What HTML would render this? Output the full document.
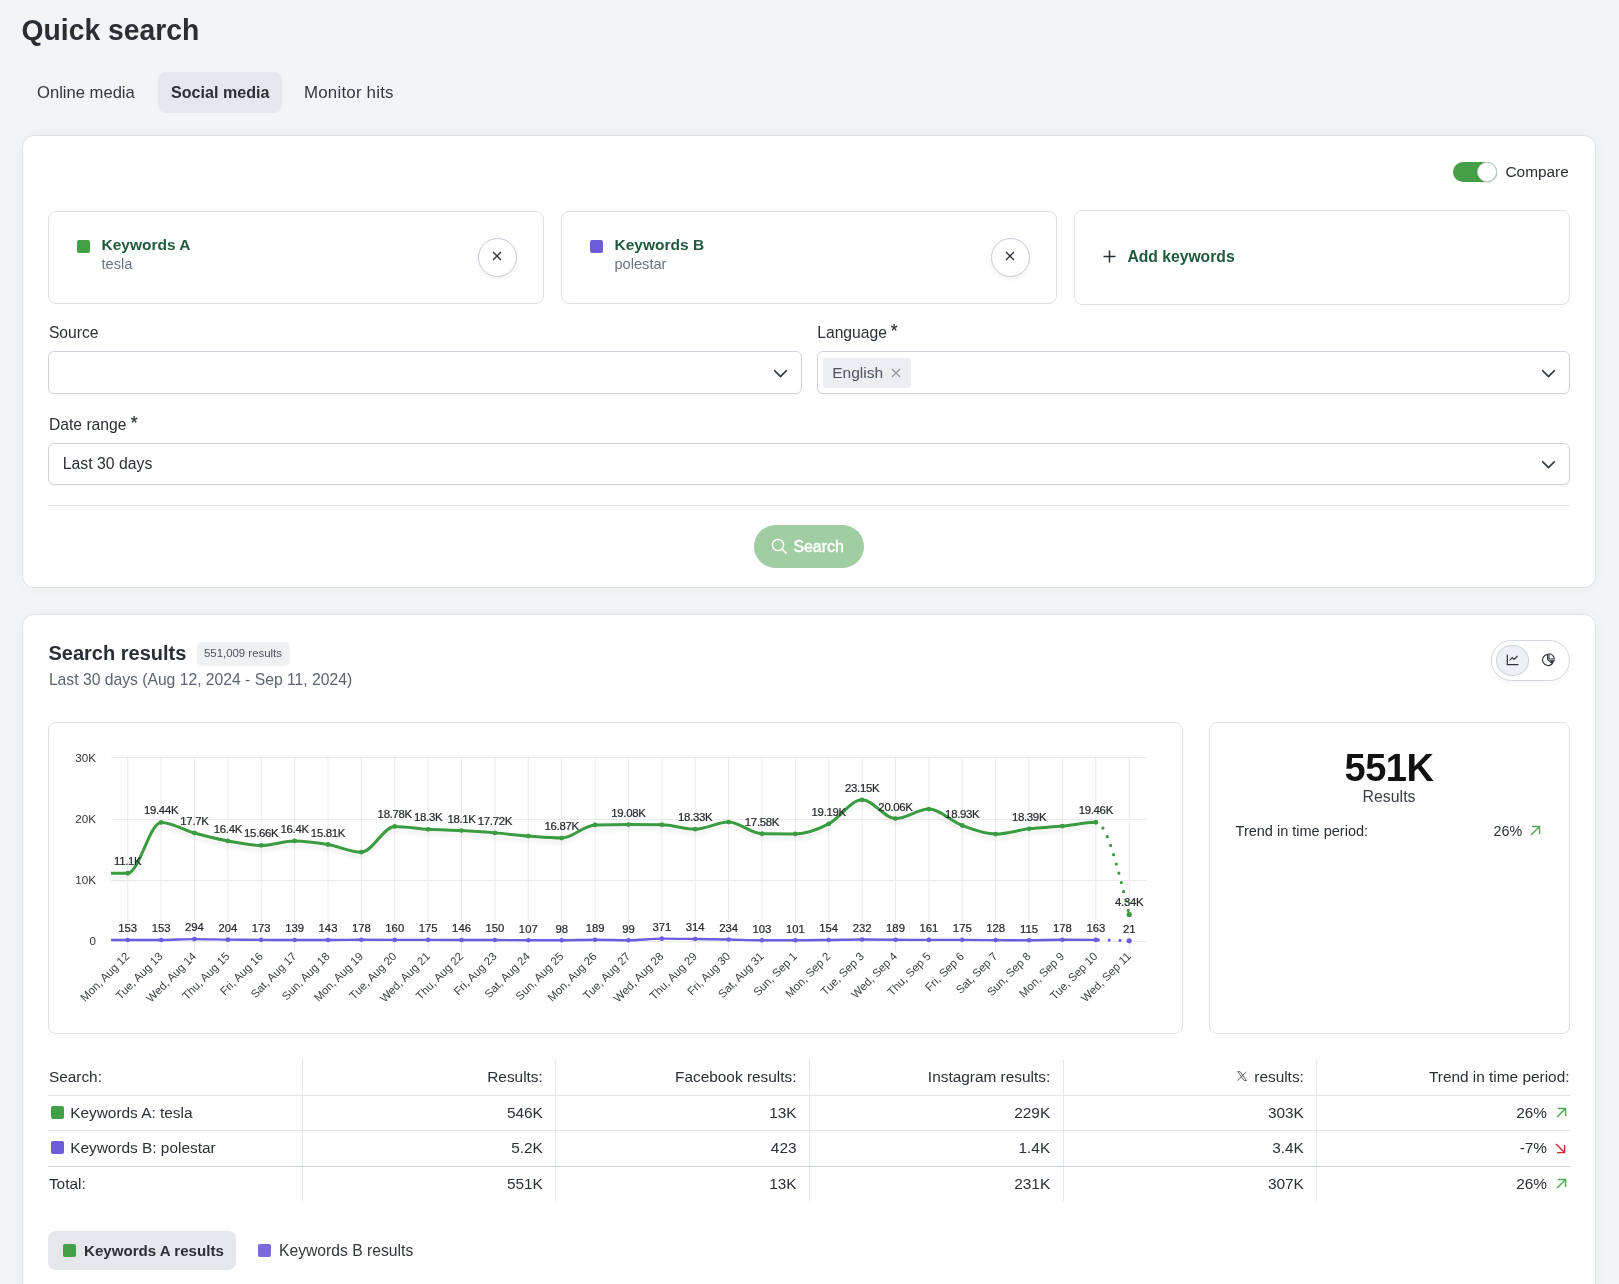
<!DOCTYPE html>
<html><head><meta charset="utf-8"><title>Quick search</title>
<style>
html,body{margin:0;padding:0;}
body{width:1619px;height:1284px;overflow:hidden;position:relative;background:#f3f4f6;font-family:"Liberation Sans", sans-serif;}
#w{position:absolute;left:0;top:0;width:1619px;height:1284px;will-change:transform;}
.t{position:absolute;white-space:nowrap;line-height:1;}
svg text{font-family:"Liberation Sans", sans-serif;}
</style></head><body><div id="w">
<div class="t" style="left:21.50px;top:15.90px;font-size:28.3px;font-weight:700;color:#2a2e35;transform:scaleY(1.06);transform-origin:0 84%;">Quick search</div>
<div style="position:absolute;left:158px;top:72px;width:124px;height:41px;box-sizing:border-box;background:#e5e7eb;border-radius:8px;"></div>
<div class="t" style="left:37.00px;top:84.51px;font-size:16.6px;font-weight:400;color:#33373d;">Online media</div>
<div class="t" style="left:171.00px;top:84.23px;font-size:16.1px;font-weight:700;color:#2b2f36;">Social media</div>
<div class="t" style="left:304.00px;top:85.26px;font-size:16.9px;font-weight:400;color:#33373d;letter-spacing:0.2px;">Monitor hits</div>
<div style="position:absolute;left:22px;top:135px;width:1574px;height:453px;box-sizing:border-box;background:#fff;border:1px solid #dde1e6;border-radius:12px;box-shadow:0 0 14px rgba(30,40,60,0.035);"></div>
<div style="position:absolute;left:1453px;top:162px;width:44px;height:20px;box-sizing:border-box;background:#43a047;border-radius:10px;"></div>
<div style="position:absolute;left:1477px;top:162px;width:20px;height:20px;box-sizing:border-box;background:#fff;border-radius:50%;border:1px solid #c9d0d6;box-shadow:0 1px 2px rgba(0,0,0,0.15);"></div>
<div class="t" style="left:1505.50px;top:163.61px;font-size:15.4px;font-weight:400;color:#2b2f36;">Compare</div>
<div style="position:absolute;left:48px;top:211px;width:496px;height:93px;box-sizing:border-box;background:#fff;border:1px solid #dde1e6;border-radius:8px;"></div>
<div style="position:absolute;left:77px;top:240px;width:13px;height:13px;box-sizing:border-box;background:#43a047;border-radius:2px;"></div>
<div class="t" style="left:101.50px;top:236.83px;font-size:15.5px;font-weight:700;color:#1f5a3c;">Keywords A</div>
<div class="t" style="left:101.50px;top:256.77px;font-size:14.6px;font-weight:400;color:#6b7280;">tesla</div>
<div style="position:absolute;left:478.0px;top:237.89999999999998px;width:39.0px;height:39.0px;box-sizing:border-box;background:#fff;border:1px solid #c6cdd5;border-radius:50%;box-shadow:0 2px 4px rgba(0,0,0,0.06);"></div>
<svg style="position:absolute;left:492.0px;top:251.2px" width="10" height="10" viewBox="0 0 10 10"><path d="M1 1L9 9M9 1L1 9" stroke="#2b2f36" stroke-width="1.35" stroke-linecap="butt"/></svg>
<div style="position:absolute;left:561px;top:211px;width:496px;height:93px;box-sizing:border-box;background:#fff;border:1px solid #dde1e6;border-radius:8px;"></div>
<div style="position:absolute;left:590px;top:240px;width:13px;height:13px;box-sizing:border-box;background:#6d5bd8;border-radius:2px;"></div>
<div class="t" style="left:614.50px;top:236.83px;font-size:15.5px;font-weight:700;color:#1f5a3c;">Keywords B</div>
<div class="t" style="left:614.50px;top:256.77px;font-size:14.6px;font-weight:400;color:#6b7280;">polestar</div>
<div style="position:absolute;left:991.0px;top:237.89999999999998px;width:39.0px;height:39.0px;box-sizing:border-box;background:#fff;border:1px solid #c6cdd5;border-radius:50%;box-shadow:0 2px 4px rgba(0,0,0,0.06);"></div>
<svg style="position:absolute;left:1005.0px;top:251.2px" width="10" height="10" viewBox="0 0 10 10"><path d="M1 1L9 9M9 1L1 9" stroke="#2b2f36" stroke-width="1.35" stroke-linecap="butt"/></svg>
<div style="position:absolute;left:1074px;top:210px;width:496px;height:95px;box-sizing:border-box;background:#fff;border:1px solid #dde1e6;border-radius:8px;"></div>
<svg style="position:absolute;left:1103px;top:250px" width="13" height="13" viewBox="0 0 13 13"><path d="M6.5 0.5V12.5M0.5 6.5H12.5" stroke="#2b2f36" stroke-width="1.5"/></svg>
<div class="t" style="left:1127.40px;top:248.96px;font-size:15.7px;font-weight:700;color:#1f5a3c;">Add keywords</div>
<div class="t" style="left:48.90px;top:325.06px;font-size:15.7px;font-weight:400;color:#2b2f36;">Source</div>
<div class="t" style="left:817.20px;top:325.06px;font-size:15.7px;font-weight:400;color:#2b2f36;">Language</div>
<div class="t" style="left:890.80px;top:322.67px;font-size:17.5px;font-weight:400;color:#2b2f36;-webkit-text-stroke:0.2px #2b2f36;">*</div>
<div style="position:absolute;left:48px;top:351px;width:754px;height:43px;box-sizing:border-box;background:#fff;border:1px solid #cfd4da;border-radius:6px;box-shadow:0 1px 2px rgba(0,0,0,0.04);"></div>
<svg style="position:absolute;left:773px;top:369px" width="15" height="9" viewBox="0 0 15 9"><path d="M1.2 1.2L7.5 7.5L13.8 1.2" fill="none" stroke="#2b2f36" stroke-width="1.6"/></svg>
<div style="position:absolute;left:817px;top:351px;width:753px;height:43px;box-sizing:border-box;background:#fff;border:1px solid #cfd4da;border-radius:6px;box-shadow:0 1px 2px rgba(0,0,0,0.04);"></div>
<svg style="position:absolute;left:1541px;top:369px" width="15" height="9" viewBox="0 0 15 9"><path d="M1.2 1.2L7.5 7.5L13.8 1.2" fill="none" stroke="#2b2f36" stroke-width="1.6"/></svg>
<div style="position:absolute;left:823px;top:358px;width:88px;height:30px;box-sizing:border-box;background:#eceef1;border-radius:4px;"></div>
<div class="t" style="left:832.20px;top:365.03px;font-size:15.5px;font-weight:400;color:#4b5260;">English</div>
<svg style="position:absolute;left:891px;top:368px" width="10" height="10" viewBox="0 0 10 10"><path d="M1 1L9 9M9 1L1 9" stroke="#8e959e" stroke-width="1.2"/></svg>
<div class="t" style="left:48.90px;top:416.96px;font-size:15.7px;font-weight:400;color:#2b2f36;">Date range</div>
<div class="t" style="left:130.80px;top:415.27px;font-size:17.5px;font-weight:400;color:#2b2f36;-webkit-text-stroke:0.2px #2b2f36;">*</div>
<div style="position:absolute;left:48px;top:443px;width:1522px;height:42px;box-sizing:border-box;background:#fff;border:1px solid #cfd4da;border-radius:6px;box-shadow:0 1px 2px rgba(0,0,0,0.04);"></div>
<div class="t" style="left:62.80px;top:455.88px;font-size:15.8px;font-weight:400;color:#2b2f36;">Last 30 days</div>
<svg style="position:absolute;left:1541px;top:460px" width="15" height="9" viewBox="0 0 15 9"><path d="M1.2 1.2L7.5 7.5L13.8 1.2" fill="none" stroke="#2b2f36" stroke-width="1.6"/></svg>
<div style="position:absolute;left:48px;top:505px;width:1522px;height:1px;box-sizing:border-box;background:#e1e4e8;"></div>
<div style="position:absolute;left:754px;top:525px;width:110px;height:43px;box-sizing:border-box;background:#a0cda2;border-radius:22px;"></div>
<svg style="position:absolute;left:771px;top:538px" width="17" height="17" viewBox="0 0 17 17"><circle cx="7" cy="7" r="5.6" fill="none" stroke="#fff" stroke-width="1.5"/><path d="M11.2 11.2L15.6 15.6" stroke="#fff" stroke-width="1.5"/></svg>
<div class="t" style="left:793.40px;top:538.80px;font-size:15.9px;font-weight:400;color:#ffffff;-webkit-text-stroke:0.45px #fff;">Search</div>
<div style="position:absolute;left:22px;top:614px;width:1574px;height:686px;box-sizing:border-box;background:#fff;border:1px solid #dde1e6;border-radius:12px;box-shadow:0 0 14px rgba(30,40,60,0.035);"></div>
<div class="t" style="left:48.50px;top:643.39px;font-size:20px;font-weight:700;color:#2a2e35;">Search results</div>
<div style="position:absolute;left:197px;top:642px;width:93px;height:24px;box-sizing:border-box;background:#eef0f2;border-radius:5px;"></div>
<div class="t" style="left:204.00px;top:647.53px;font-size:11.4px;font-weight:400;color:#4b5260;">551,009 results</div>
<div class="t" style="left:48.90px;top:671.96px;font-size:15.7px;font-weight:400;color:#5d6470;">Last 30 days (Aug 12, 2024 - Sep 11, 2024)</div>
<div style="position:absolute;left:1491px;top:640px;width:79px;height:41px;box-sizing:border-box;background:#fff;border:1px solid #d3d8de;border-radius:21px;box-shadow:0 2px 4px rgba(0,0,0,0.04);"></div>
<div style="position:absolute;left:1496.3px;top:645px;width:32.40000000000009px;height:30.600000000000023px;box-sizing:border-box;background:#eef0f3;border:1px solid #cdd3da;border-radius:50%;"></div>
<svg style="position:absolute;left:1485px;top:635px" width="90" height="50" viewBox="1485 635 90 50"><path d="M1507.3 654.4V664.6H1518.5" fill="none" stroke="#2f3338" stroke-width="1.25"/><path d="M1509.5 660.5L1512.2 657.6L1514 659.4L1517.6 656" fill="none" stroke="#2f3338" stroke-width="1.05"/><path d="M1547.6 654.4A5.6 5.6 0 1 0 1552.4 663.6L1547.6 659.6Z" fill="none" stroke="#2f3338" stroke-width="1.15" stroke-linejoin="round"/><path d="M1549 653.8A5.4 5.4 0 0 1 1554.3 659H1549Z" fill="none" stroke="#2f3338" stroke-width="1.1"/><path d="M1549.2 660.2H1555L1552.6 663.8Z" fill="#2f3338"/></svg>
<div style="position:absolute;left:48px;top:722px;width:1135px;height:312px;box-sizing:border-box;background:#fff;border:1px solid #dde1e6;border-radius:8px;"></div>
<div style="position:absolute;left:1209px;top:722px;width:361px;height:312px;box-sizing:border-box;background:#fff;border:1px solid #dde1e6;border-radius:8px;"></div>
<div class="t" style="left:989.00px;width:800px;text-align:center;top:748.94px;font-size:38px;font-weight:700;color:#111111;letter-spacing:-0.5px;">551K</div>
<div class="t" style="left:989.00px;width:800px;text-align:center;top:789.30px;font-size:15.9px;font-weight:400;color:#3b4048;">Results</div>
<div class="t" style="left:1235.60px;top:823.96px;font-size:14.5px;font-weight:400;color:#2b2f36;">Trend in time period:</div>
<div class="t" style="right:96.80px;text-align:right;top:824.12px;font-size:14.3px;font-weight:400;color:#2b2f36;">26%</div>
<svg style="position:absolute;left:1529.5px;top:824.5px" width="11" height="11" viewBox="0 0 11 11"><path d="M1 10L9.6 1.4M2 1.4H9.6V9" fill="none" stroke="#4fae55" stroke-width="1.45"/></svg>
<svg style="position:absolute;left:0;top:0" width="1619" height="1284" viewBox="0 0 1619 1284">
<defs><filter id="sh" x="-5%" y="-20%" width="110%" height="160%"><feGaussianBlur in="SourceAlpha" stdDeviation="2.2"/><feOffset dy="3.5"/><feComponentTransfer><feFuncA type="linear" slope="0.08"/></feComponentTransfer><feMerge><feMergeNode/><feMergeNode in="SourceGraphic"/></feMerge></filter></defs>
<line x1="111" y1="941.50" x2="1146.5" y2="941.50" stroke="#e8eaee" stroke-width="1"/>
<line x1="111" y1="880.50" x2="1146.5" y2="880.50" stroke="#e8eaee" stroke-width="1"/>
<line x1="111" y1="819.50" x2="1146.5" y2="819.50" stroke="#e8eaee" stroke-width="1"/>
<line x1="111" y1="757.50" x2="1146.5" y2="757.50" stroke="#e8eaee" stroke-width="1"/>
<line x1="127.70" y1="758.02" x2="127.70" y2="951" stroke="#e8eaee" stroke-width="1"/>
<line x1="161.08" y1="758.02" x2="161.08" y2="951" stroke="#e8eaee" stroke-width="1"/>
<line x1="194.47" y1="758.02" x2="194.47" y2="951" stroke="#e8eaee" stroke-width="1"/>
<line x1="227.85" y1="758.02" x2="227.85" y2="951" stroke="#e8eaee" stroke-width="1"/>
<line x1="261.23" y1="758.02" x2="261.23" y2="951" stroke="#e8eaee" stroke-width="1"/>
<line x1="294.62" y1="758.02" x2="294.62" y2="951" stroke="#e8eaee" stroke-width="1"/>
<line x1="328.00" y1="758.02" x2="328.00" y2="951" stroke="#e8eaee" stroke-width="1"/>
<line x1="361.38" y1="758.02" x2="361.38" y2="951" stroke="#e8eaee" stroke-width="1"/>
<line x1="394.76" y1="758.02" x2="394.76" y2="951" stroke="#e8eaee" stroke-width="1"/>
<line x1="428.15" y1="758.02" x2="428.15" y2="951" stroke="#e8eaee" stroke-width="1"/>
<line x1="461.53" y1="758.02" x2="461.53" y2="951" stroke="#e8eaee" stroke-width="1"/>
<line x1="494.91" y1="758.02" x2="494.91" y2="951" stroke="#e8eaee" stroke-width="1"/>
<line x1="528.30" y1="758.02" x2="528.30" y2="951" stroke="#e8eaee" stroke-width="1"/>
<line x1="561.68" y1="758.02" x2="561.68" y2="951" stroke="#e8eaee" stroke-width="1"/>
<line x1="595.06" y1="758.02" x2="595.06" y2="951" stroke="#e8eaee" stroke-width="1"/>
<line x1="628.45" y1="758.02" x2="628.45" y2="951" stroke="#e8eaee" stroke-width="1"/>
<line x1="661.83" y1="758.02" x2="661.83" y2="951" stroke="#e8eaee" stroke-width="1"/>
<line x1="695.21" y1="758.02" x2="695.21" y2="951" stroke="#e8eaee" stroke-width="1"/>
<line x1="728.59" y1="758.02" x2="728.59" y2="951" stroke="#e8eaee" stroke-width="1"/>
<line x1="761.98" y1="758.02" x2="761.98" y2="951" stroke="#e8eaee" stroke-width="1"/>
<line x1="795.36" y1="758.02" x2="795.36" y2="951" stroke="#e8eaee" stroke-width="1"/>
<line x1="828.74" y1="758.02" x2="828.74" y2="951" stroke="#e8eaee" stroke-width="1"/>
<line x1="862.13" y1="758.02" x2="862.13" y2="951" stroke="#e8eaee" stroke-width="1"/>
<line x1="895.51" y1="758.02" x2="895.51" y2="951" stroke="#e8eaee" stroke-width="1"/>
<line x1="928.89" y1="758.02" x2="928.89" y2="951" stroke="#e8eaee" stroke-width="1"/>
<line x1="962.28" y1="758.02" x2="962.28" y2="951" stroke="#e8eaee" stroke-width="1"/>
<line x1="995.66" y1="758.02" x2="995.66" y2="951" stroke="#e8eaee" stroke-width="1"/>
<line x1="1029.04" y1="758.02" x2="1029.04" y2="951" stroke="#e8eaee" stroke-width="1"/>
<line x1="1062.42" y1="758.02" x2="1062.42" y2="951" stroke="#e8eaee" stroke-width="1"/>
<line x1="1095.81" y1="758.02" x2="1095.81" y2="951" stroke="#e8eaee" stroke-width="1"/>
<line x1="1129.19" y1="758.02" x2="1129.19" y2="951" stroke="#e8eaee" stroke-width="1"/>
<text x="96" y="944.90" text-anchor="end" font-size="11.6" fill="#333">0</text>
<text x="96" y="883.94" text-anchor="end" font-size="11.6" fill="#333">10K</text>
<text x="96" y="822.98" text-anchor="end" font-size="11.6" fill="#333">20K</text>
<text x="96" y="762.02" text-anchor="end" font-size="11.6" fill="#333">30K</text>
<path d="M111.00,873.23C116.57,873.23 122.13,873.23 127.70,873.23C138.83,873.23 149.96,822.39 161.08,822.39C172.21,822.39 183.34,829.91 194.47,833.00C205.59,836.09 216.72,838.85 227.85,840.93C238.98,843.00 250.10,845.44 261.23,845.44C272.36,845.44 283.49,840.93 294.62,840.93C305.74,840.93 316.87,842.64 328.00,844.52C339.13,846.40 350.25,852.20 361.38,852.20C372.51,852.20 383.64,826.42 394.76,826.42C405.89,826.42 417.02,828.65 428.15,829.34C439.27,830.03 450.40,829.97 461.53,830.56C472.66,831.15 483.79,831.96 494.91,832.88C506.04,833.79 517.17,835.19 528.30,836.05C539.42,836.91 550.55,838.06 561.68,838.06C572.81,838.06 583.93,825.10 595.06,824.89C606.19,824.69 617.32,824.59 628.45,824.59C639.57,824.59 650.70,824.63 661.83,824.71C672.96,824.79 684.08,829.16 695.21,829.16C706.34,829.16 717.47,822.03 728.59,822.03C739.72,822.03 750.85,833.61 761.98,833.73C773.10,833.85 784.23,833.92 795.36,833.92C806.49,833.92 817.62,829.61 828.74,823.92C839.87,818.23 851.00,799.78 862.13,799.78C873.25,799.78 884.38,818.61 895.51,818.61C906.64,818.61 917.76,809.10 928.89,809.10C940.02,809.10 951.15,821.35 962.28,825.50C973.40,829.66 984.53,834.04 995.66,834.04C1006.79,834.04 1017.91,830.12 1029.04,828.79C1040.17,827.47 1051.30,827.20 1062.42,826.11C1073.55,825.03 1084.68,822.27 1095.81,822.27" fill="none" stroke="#3b9b40" stroke-width="3" stroke-linejoin="round" filter="url(#sh)"/>
<path d="M1095.81,822.27C1106.93,822.27 1118.06,868.36 1129.19,914.44" fill="none" stroke="#3b9b40" stroke-width="3.2" stroke-linecap="round" stroke-dasharray="0 9.6" />
<circle cx="127.70" cy="873.23" r="2.4" fill="#3b9b40"/>
<circle cx="161.08" cy="822.39" r="2.4" fill="#3b9b40"/>
<circle cx="194.47" cy="833.00" r="2.4" fill="#3b9b40"/>
<circle cx="227.85" cy="840.93" r="2.4" fill="#3b9b40"/>
<circle cx="261.23" cy="845.44" r="2.4" fill="#3b9b40"/>
<circle cx="294.62" cy="840.93" r="2.4" fill="#3b9b40"/>
<circle cx="328.00" cy="844.52" r="2.4" fill="#3b9b40"/>
<circle cx="361.38" cy="852.20" r="2.4" fill="#3b9b40"/>
<circle cx="394.76" cy="826.42" r="2.4" fill="#3b9b40"/>
<circle cx="428.15" cy="829.34" r="2.4" fill="#3b9b40"/>
<circle cx="461.53" cy="830.56" r="2.4" fill="#3b9b40"/>
<circle cx="494.91" cy="832.88" r="2.4" fill="#3b9b40"/>
<circle cx="528.30" cy="836.05" r="2.4" fill="#3b9b40"/>
<circle cx="561.68" cy="838.06" r="2.4" fill="#3b9b40"/>
<circle cx="595.06" cy="824.89" r="2.4" fill="#3b9b40"/>
<circle cx="628.45" cy="824.59" r="2.4" fill="#3b9b40"/>
<circle cx="661.83" cy="824.71" r="2.4" fill="#3b9b40"/>
<circle cx="695.21" cy="829.16" r="2.4" fill="#3b9b40"/>
<circle cx="728.59" cy="822.03" r="2.4" fill="#3b9b40"/>
<circle cx="761.98" cy="833.73" r="2.4" fill="#3b9b40"/>
<circle cx="795.36" cy="833.92" r="2.4" fill="#3b9b40"/>
<circle cx="828.74" cy="823.92" r="2.4" fill="#3b9b40"/>
<circle cx="862.13" cy="799.78" r="2.4" fill="#3b9b40"/>
<circle cx="895.51" cy="818.61" r="2.4" fill="#3b9b40"/>
<circle cx="928.89" cy="809.10" r="2.4" fill="#3b9b40"/>
<circle cx="962.28" cy="825.50" r="2.4" fill="#3b9b40"/>
<circle cx="995.66" cy="834.04" r="2.4" fill="#3b9b40"/>
<circle cx="1029.04" cy="828.79" r="2.4" fill="#3b9b40"/>
<circle cx="1062.42" cy="826.11" r="2.4" fill="#3b9b40"/>
<circle cx="1095.81" cy="822.27" r="2.4" fill="#3b9b40"/>
<circle cx="1129.19" cy="914.44" r="2.6" fill="#3b9b40"/>
<path d="M111.00,939.97C116.57,939.97 122.13,939.97 127.70,939.97C138.83,939.97 149.96,939.97 161.08,939.97C172.21,939.97 183.34,939.11 194.47,939.11C205.59,939.11 216.72,939.53 227.85,939.66C238.98,939.78 250.10,939.78 261.23,939.85C272.36,939.91 283.49,940.05 294.62,940.05C305.74,940.05 316.87,940.04 328.00,940.03C339.13,940.01 350.25,939.81 361.38,939.81C372.51,939.81 383.64,939.92 394.76,939.92C405.89,939.92 417.02,939.83 428.15,939.83C439.27,939.83 450.40,940.01 461.53,940.01C472.66,940.01 483.79,939.99 494.91,939.99C506.04,939.99 517.17,940.21 528.30,940.25C539.42,940.28 550.55,940.30 561.68,940.30C572.81,940.30 583.93,939.75 595.06,939.75C606.19,939.75 617.32,940.30 628.45,940.30C639.57,940.30 650.70,938.64 661.83,938.64C672.96,938.64 684.08,938.85 695.21,938.99C706.34,939.13 717.47,939.26 728.59,939.47C739.72,939.69 750.85,940.26 761.98,940.27C773.10,940.28 784.23,940.28 795.36,940.28C806.49,940.28 817.62,940.09 828.74,939.96C839.87,939.83 851.00,939.49 862.13,939.49C873.25,939.49 884.38,939.68 895.51,939.75C906.64,939.82 917.76,939.92 928.89,939.92C940.02,939.92 951.15,939.83 962.28,939.83C973.40,939.83 984.53,940.07 995.66,940.12C1006.79,940.17 1017.91,940.20 1029.04,940.20C1040.17,940.20 1051.30,939.81 1062.42,939.81C1073.55,939.81 1084.68,939.85 1095.81,939.91" fill="none" stroke="#6c5ce0" stroke-width="2.4" stroke-linejoin="round"/>
<path d="M1095.81,939.91C1106.93,939.97 1118.06,940.37 1129.19,940.77" fill="none" stroke="#6c5ce0" stroke-width="3.2" stroke-linecap="round" stroke-dasharray="0 10.8" stroke-dashoffset="-2.6"/>
<circle cx="127.70" cy="939.97" r="2.3" fill="#6c5ce0"/>
<circle cx="161.08" cy="939.97" r="2.3" fill="#6c5ce0"/>
<circle cx="194.47" cy="939.11" r="2.3" fill="#6c5ce0"/>
<circle cx="227.85" cy="939.66" r="2.3" fill="#6c5ce0"/>
<circle cx="261.23" cy="939.85" r="2.3" fill="#6c5ce0"/>
<circle cx="294.62" cy="940.05" r="2.3" fill="#6c5ce0"/>
<circle cx="328.00" cy="940.03" r="2.3" fill="#6c5ce0"/>
<circle cx="361.38" cy="939.81" r="2.3" fill="#6c5ce0"/>
<circle cx="394.76" cy="939.92" r="2.3" fill="#6c5ce0"/>
<circle cx="428.15" cy="939.83" r="2.3" fill="#6c5ce0"/>
<circle cx="461.53" cy="940.01" r="2.3" fill="#6c5ce0"/>
<circle cx="494.91" cy="939.99" r="2.3" fill="#6c5ce0"/>
<circle cx="528.30" cy="940.25" r="2.3" fill="#6c5ce0"/>
<circle cx="561.68" cy="940.30" r="2.3" fill="#6c5ce0"/>
<circle cx="595.06" cy="939.75" r="2.3" fill="#6c5ce0"/>
<circle cx="628.45" cy="940.30" r="2.3" fill="#6c5ce0"/>
<circle cx="661.83" cy="938.64" r="2.3" fill="#6c5ce0"/>
<circle cx="695.21" cy="938.99" r="2.3" fill="#6c5ce0"/>
<circle cx="728.59" cy="939.47" r="2.3" fill="#6c5ce0"/>
<circle cx="761.98" cy="940.27" r="2.3" fill="#6c5ce0"/>
<circle cx="795.36" cy="940.28" r="2.3" fill="#6c5ce0"/>
<circle cx="828.74" cy="939.96" r="2.3" fill="#6c5ce0"/>
<circle cx="862.13" cy="939.49" r="2.3" fill="#6c5ce0"/>
<circle cx="895.51" cy="939.75" r="2.3" fill="#6c5ce0"/>
<circle cx="928.89" cy="939.92" r="2.3" fill="#6c5ce0"/>
<circle cx="962.28" cy="939.83" r="2.3" fill="#6c5ce0"/>
<circle cx="995.66" cy="940.12" r="2.3" fill="#6c5ce0"/>
<circle cx="1029.04" cy="940.20" r="2.3" fill="#6c5ce0"/>
<circle cx="1062.42" cy="939.81" r="2.3" fill="#6c5ce0"/>
<circle cx="1095.81" cy="939.91" r="2.3" fill="#6c5ce0"/>
<circle cx="1129.19" cy="940.77" r="2.6" fill="#6c5ce0"/>
<text x="127.70" y="865.23" text-anchor="middle" font-size="11.4" letter-spacing="-0.3" fill="#26292e" stroke="#26292e" stroke-width="0.22">11.1K</text>
<text x="127.70" y="932.27" text-anchor="middle" font-size="11.3" fill="#26292e" stroke="#26292e" stroke-width="0.22">153</text>
<text x="161.08" y="814.39" text-anchor="middle" font-size="11.4" letter-spacing="-0.3" fill="#26292e" stroke="#26292e" stroke-width="0.22">19.44K</text>
<text x="161.08" y="932.27" text-anchor="middle" font-size="11.3" fill="#26292e" stroke="#26292e" stroke-width="0.22">153</text>
<text x="194.47" y="825.00" text-anchor="middle" font-size="11.4" letter-spacing="-0.3" fill="#26292e" stroke="#26292e" stroke-width="0.22">17.7K</text>
<text x="194.47" y="931.41" text-anchor="middle" font-size="11.3" fill="#26292e" stroke="#26292e" stroke-width="0.22">294</text>
<text x="227.85" y="832.93" text-anchor="middle" font-size="11.4" letter-spacing="-0.3" fill="#26292e" stroke="#26292e" stroke-width="0.22">16.4K</text>
<text x="227.85" y="931.96" text-anchor="middle" font-size="11.3" fill="#26292e" stroke="#26292e" stroke-width="0.22">204</text>
<text x="261.23" y="837.44" text-anchor="middle" font-size="11.4" letter-spacing="-0.3" fill="#26292e" stroke="#26292e" stroke-width="0.22">15.66K</text>
<text x="261.23" y="932.15" text-anchor="middle" font-size="11.3" fill="#26292e" stroke="#26292e" stroke-width="0.22">173</text>
<text x="294.62" y="832.93" text-anchor="middle" font-size="11.4" letter-spacing="-0.3" fill="#26292e" stroke="#26292e" stroke-width="0.22">16.4K</text>
<text x="294.62" y="932.35" text-anchor="middle" font-size="11.3" fill="#26292e" stroke="#26292e" stroke-width="0.22">139</text>
<text x="328.00" y="836.52" text-anchor="middle" font-size="11.4" letter-spacing="-0.3" fill="#26292e" stroke="#26292e" stroke-width="0.22">15.81K</text>
<text x="328.00" y="932.33" text-anchor="middle" font-size="11.3" fill="#26292e" stroke="#26292e" stroke-width="0.22">143</text>
<text x="361.38" y="932.11" text-anchor="middle" font-size="11.3" fill="#26292e" stroke="#26292e" stroke-width="0.22">178</text>
<text x="394.76" y="818.42" text-anchor="middle" font-size="11.4" letter-spacing="-0.3" fill="#26292e" stroke="#26292e" stroke-width="0.22">18.78K</text>
<text x="394.76" y="932.22" text-anchor="middle" font-size="11.3" fill="#26292e" stroke="#26292e" stroke-width="0.22">160</text>
<text x="428.15" y="821.34" text-anchor="middle" font-size="11.4" letter-spacing="-0.3" fill="#26292e" stroke="#26292e" stroke-width="0.22">18.3K</text>
<text x="428.15" y="932.13" text-anchor="middle" font-size="11.3" fill="#26292e" stroke="#26292e" stroke-width="0.22">175</text>
<text x="461.53" y="822.56" text-anchor="middle" font-size="11.4" letter-spacing="-0.3" fill="#26292e" stroke="#26292e" stroke-width="0.22">18.1K</text>
<text x="461.53" y="932.31" text-anchor="middle" font-size="11.3" fill="#26292e" stroke="#26292e" stroke-width="0.22">146</text>
<text x="494.91" y="824.88" text-anchor="middle" font-size="11.4" letter-spacing="-0.3" fill="#26292e" stroke="#26292e" stroke-width="0.22">17.72K</text>
<text x="494.91" y="932.29" text-anchor="middle" font-size="11.3" fill="#26292e" stroke="#26292e" stroke-width="0.22">150</text>
<text x="528.30" y="932.55" text-anchor="middle" font-size="11.3" fill="#26292e" stroke="#26292e" stroke-width="0.22">107</text>
<text x="561.68" y="830.06" text-anchor="middle" font-size="11.4" letter-spacing="-0.3" fill="#26292e" stroke="#26292e" stroke-width="0.22">16.87K</text>
<text x="561.68" y="932.60" text-anchor="middle" font-size="11.3" fill="#26292e" stroke="#26292e" stroke-width="0.22">98</text>
<text x="595.06" y="932.05" text-anchor="middle" font-size="11.3" fill="#26292e" stroke="#26292e" stroke-width="0.22">189</text>
<text x="628.45" y="816.59" text-anchor="middle" font-size="11.4" letter-spacing="-0.3" fill="#26292e" stroke="#26292e" stroke-width="0.22">19.08K</text>
<text x="628.45" y="932.60" text-anchor="middle" font-size="11.3" fill="#26292e" stroke="#26292e" stroke-width="0.22">99</text>
<text x="661.83" y="930.94" text-anchor="middle" font-size="11.3" fill="#26292e" stroke="#26292e" stroke-width="0.22">371</text>
<text x="695.21" y="821.16" text-anchor="middle" font-size="11.4" letter-spacing="-0.3" fill="#26292e" stroke="#26292e" stroke-width="0.22">18.33K</text>
<text x="695.21" y="931.29" text-anchor="middle" font-size="11.3" fill="#26292e" stroke="#26292e" stroke-width="0.22">314</text>
<text x="728.59" y="931.77" text-anchor="middle" font-size="11.3" fill="#26292e" stroke="#26292e" stroke-width="0.22">234</text>
<text x="761.98" y="825.73" text-anchor="middle" font-size="11.4" letter-spacing="-0.3" fill="#26292e" stroke="#26292e" stroke-width="0.22">17.58K</text>
<text x="761.98" y="932.57" text-anchor="middle" font-size="11.3" fill="#26292e" stroke="#26292e" stroke-width="0.22">103</text>
<text x="795.36" y="932.58" text-anchor="middle" font-size="11.3" fill="#26292e" stroke="#26292e" stroke-width="0.22">101</text>
<text x="828.74" y="815.92" text-anchor="middle" font-size="11.4" letter-spacing="-0.3" fill="#26292e" stroke="#26292e" stroke-width="0.22">19.19K</text>
<text x="828.74" y="932.26" text-anchor="middle" font-size="11.3" fill="#26292e" stroke="#26292e" stroke-width="0.22">154</text>
<text x="862.13" y="791.78" text-anchor="middle" font-size="11.4" letter-spacing="-0.3" fill="#26292e" stroke="#26292e" stroke-width="0.22">23.15K</text>
<text x="862.13" y="931.79" text-anchor="middle" font-size="11.3" fill="#26292e" stroke="#26292e" stroke-width="0.22">232</text>
<text x="895.51" y="810.61" text-anchor="middle" font-size="11.4" letter-spacing="-0.3" fill="#26292e" stroke="#26292e" stroke-width="0.22">20.06K</text>
<text x="895.51" y="932.05" text-anchor="middle" font-size="11.3" fill="#26292e" stroke="#26292e" stroke-width="0.22">189</text>
<text x="928.89" y="932.22" text-anchor="middle" font-size="11.3" fill="#26292e" stroke="#26292e" stroke-width="0.22">161</text>
<text x="962.28" y="817.50" text-anchor="middle" font-size="11.4" letter-spacing="-0.3" fill="#26292e" stroke="#26292e" stroke-width="0.22">18.93K</text>
<text x="962.28" y="932.13" text-anchor="middle" font-size="11.3" fill="#26292e" stroke="#26292e" stroke-width="0.22">175</text>
<text x="995.66" y="932.42" text-anchor="middle" font-size="11.3" fill="#26292e" stroke="#26292e" stroke-width="0.22">128</text>
<text x="1029.04" y="820.79" text-anchor="middle" font-size="11.4" letter-spacing="-0.3" fill="#26292e" stroke="#26292e" stroke-width="0.22">18.39K</text>
<text x="1029.04" y="932.50" text-anchor="middle" font-size="11.3" fill="#26292e" stroke="#26292e" stroke-width="0.22">115</text>
<text x="1062.42" y="932.11" text-anchor="middle" font-size="11.3" fill="#26292e" stroke="#26292e" stroke-width="0.22">178</text>
<text x="1095.81" y="814.27" text-anchor="middle" font-size="11.4" letter-spacing="-0.3" fill="#26292e" stroke="#26292e" stroke-width="0.22">19.46K</text>
<text x="1095.81" y="932.21" text-anchor="middle" font-size="11.3" fill="#26292e" stroke="#26292e" stroke-width="0.22">163</text>
<text x="1129.19" y="906.44" text-anchor="middle" font-size="11.4" letter-spacing="-0.3" fill="#26292e" stroke="#26292e" stroke-width="0.22">4.34K</text>
<text x="1129.19" y="933.07" text-anchor="middle" font-size="11.3" fill="#26292e" stroke="#26292e" stroke-width="0.22">21</text>
<text x="130.20" y="957" text-anchor="end" font-size="11.4" fill="#3a3e44" transform="rotate(-45 130.20 957)">Mon, Aug 12</text>
<text x="163.58" y="957" text-anchor="end" font-size="11.4" fill="#3a3e44" transform="rotate(-45 163.58 957)">Tue, Aug 13</text>
<text x="196.97" y="957" text-anchor="end" font-size="11.4" fill="#3a3e44" transform="rotate(-45 196.97 957)">Wed, Aug 14</text>
<text x="230.35" y="957" text-anchor="end" font-size="11.4" fill="#3a3e44" transform="rotate(-45 230.35 957)">Thu, Aug 15</text>
<text x="263.73" y="957" text-anchor="end" font-size="11.4" fill="#3a3e44" transform="rotate(-45 263.73 957)">Fri, Aug 16</text>
<text x="297.12" y="957" text-anchor="end" font-size="11.4" fill="#3a3e44" transform="rotate(-45 297.12 957)">Sat, Aug 17</text>
<text x="330.50" y="957" text-anchor="end" font-size="11.4" fill="#3a3e44" transform="rotate(-45 330.50 957)">Sun, Aug 18</text>
<text x="363.88" y="957" text-anchor="end" font-size="11.4" fill="#3a3e44" transform="rotate(-45 363.88 957)">Mon, Aug 19</text>
<text x="397.26" y="957" text-anchor="end" font-size="11.4" fill="#3a3e44" transform="rotate(-45 397.26 957)">Tue, Aug 20</text>
<text x="430.65" y="957" text-anchor="end" font-size="11.4" fill="#3a3e44" transform="rotate(-45 430.65 957)">Wed, Aug 21</text>
<text x="464.03" y="957" text-anchor="end" font-size="11.4" fill="#3a3e44" transform="rotate(-45 464.03 957)">Thu, Aug 22</text>
<text x="497.41" y="957" text-anchor="end" font-size="11.4" fill="#3a3e44" transform="rotate(-45 497.41 957)">Fri, Aug 23</text>
<text x="530.80" y="957" text-anchor="end" font-size="11.4" fill="#3a3e44" transform="rotate(-45 530.80 957)">Sat, Aug 24</text>
<text x="564.18" y="957" text-anchor="end" font-size="11.4" fill="#3a3e44" transform="rotate(-45 564.18 957)">Sun, Aug 25</text>
<text x="597.56" y="957" text-anchor="end" font-size="11.4" fill="#3a3e44" transform="rotate(-45 597.56 957)">Mon, Aug 26</text>
<text x="630.95" y="957" text-anchor="end" font-size="11.4" fill="#3a3e44" transform="rotate(-45 630.95 957)">Tue, Aug 27</text>
<text x="664.33" y="957" text-anchor="end" font-size="11.4" fill="#3a3e44" transform="rotate(-45 664.33 957)">Wed, Aug 28</text>
<text x="697.71" y="957" text-anchor="end" font-size="11.4" fill="#3a3e44" transform="rotate(-45 697.71 957)">Thu, Aug 29</text>
<text x="731.09" y="957" text-anchor="end" font-size="11.4" fill="#3a3e44" transform="rotate(-45 731.09 957)">Fri, Aug 30</text>
<text x="764.48" y="957" text-anchor="end" font-size="11.4" fill="#3a3e44" transform="rotate(-45 764.48 957)">Sat, Aug 31</text>
<text x="797.86" y="957" text-anchor="end" font-size="11.4" fill="#3a3e44" transform="rotate(-45 797.86 957)">Sun, Sep 1</text>
<text x="831.24" y="957" text-anchor="end" font-size="11.4" fill="#3a3e44" transform="rotate(-45 831.24 957)">Mon, Sep 2</text>
<text x="864.63" y="957" text-anchor="end" font-size="11.4" fill="#3a3e44" transform="rotate(-45 864.63 957)">Tue, Sep 3</text>
<text x="898.01" y="957" text-anchor="end" font-size="11.4" fill="#3a3e44" transform="rotate(-45 898.01 957)">Wed, Sep 4</text>
<text x="931.39" y="957" text-anchor="end" font-size="11.4" fill="#3a3e44" transform="rotate(-45 931.39 957)">Thu, Sep 5</text>
<text x="964.78" y="957" text-anchor="end" font-size="11.4" fill="#3a3e44" transform="rotate(-45 964.78 957)">Fri, Sep 6</text>
<text x="998.16" y="957" text-anchor="end" font-size="11.4" fill="#3a3e44" transform="rotate(-45 998.16 957)">Sat, Sep 7</text>
<text x="1031.54" y="957" text-anchor="end" font-size="11.4" fill="#3a3e44" transform="rotate(-45 1031.54 957)">Sun, Sep 8</text>
<text x="1064.92" y="957" text-anchor="end" font-size="11.4" fill="#3a3e44" transform="rotate(-45 1064.92 957)">Mon, Sep 9</text>
<text x="1098.31" y="957" text-anchor="end" font-size="11.4" fill="#3a3e44" transform="rotate(-45 1098.31 957)">Tue, Sep 10</text>
<text x="1131.69" y="957" text-anchor="end" font-size="11.4" fill="#3a3e44" transform="rotate(-45 1131.69 957)">Wed, Sep 11</text>
</svg>
<div style="position:absolute;left:302px;top:1060px;width:1px;height:141px;box-sizing:border-box;background:#e3e6ea;"></div>
<div style="position:absolute;left:555px;top:1060px;width:1px;height:141px;box-sizing:border-box;background:#e3e6ea;"></div>
<div style="position:absolute;left:809px;top:1060px;width:1px;height:141px;box-sizing:border-box;background:#e3e6ea;"></div>
<div style="position:absolute;left:1063px;top:1060px;width:1px;height:141px;box-sizing:border-box;background:#e3e6ea;"></div>
<div style="position:absolute;left:1316px;top:1060px;width:1px;height:141px;box-sizing:border-box;background:#e3e6ea;"></div>
<div style="position:absolute;left:48px;top:1095px;width:1522px;height:1px;box-sizing:border-box;background:#e3e6ea;"></div>
<div style="position:absolute;left:48px;top:1130px;width:1522px;height:1px;box-sizing:border-box;background:#e3e6ea;"></div>
<div style="position:absolute;left:48px;top:1166px;width:1522px;height:1px;box-sizing:border-box;background:#cdd3da;"></div>
<div class="t" style="left:48.90px;top:1069.01px;font-size:15.4px;font-weight:400;color:#2b2f36;">Search:</div>
<div class="t" style="right:1076.16px;text-align:right;top:1069.01px;font-size:15.4px;font-weight:400;color:#2b2f36;">Results:</div>
<div class="t" style="right:822.49px;text-align:right;top:1069.01px;font-size:15.4px;font-weight:400;color:#2b2f36;">Facebook results:</div>
<div class="t" style="right:568.82px;text-align:right;top:1069.01px;font-size:15.4px;font-weight:400;color:#2b2f36;">Instagram results:</div>
<div class="t" style="right:315.15px;text-align:right;top:1069.01px;font-size:15.4px;font-weight:400;color:#2b2f36;">results:</div>
<div class="t" style="right:49.50px;text-align:right;top:1069.01px;font-size:15.4px;font-weight:400;color:#2b2f36;">Trend in time period:</div>
<svg style="position:absolute;left:1236.7px;top:1071.3px" width="10.3" height="10.3" viewBox="0 0 11 11"><path d="M0.6 10.4L10 0.8" fill="none" stroke="#3a3e44" stroke-width="0.85"/><path d="M0.8 0.7H3.3L10.2 10.3H7.7Z" fill="none" stroke="#3a3e44" stroke-width="0.85" stroke-linejoin="round"/></svg>
<div style="position:absolute;left:50.7px;top:1106px;width:13.0px;height:13px;box-sizing:border-box;background:#43a047;border-radius:2px;"></div>
<div class="t" style="left:70.20px;top:1105.21px;font-size:15.4px;font-weight:400;color:#2b2f36;">Keywords A: tesla</div>
<div class="t" style="right:1076.16px;text-align:right;top:1105.21px;font-size:15.4px;font-weight:400;color:#2b2f36;">546K</div>
<div class="t" style="right:822.49px;text-align:right;top:1105.21px;font-size:15.4px;font-weight:400;color:#2b2f36;">13K</div>
<div class="t" style="right:568.82px;text-align:right;top:1105.21px;font-size:15.4px;font-weight:400;color:#2b2f36;">229K</div>
<div class="t" style="right:315.15px;text-align:right;top:1105.21px;font-size:15.4px;font-weight:400;color:#2b2f36;">303K</div>
<div class="t" style="right:72.00px;text-align:right;top:1105.21px;font-size:15.4px;font-weight:400;color:#2b2f36;">26%</div>
<svg style="position:absolute;left:1556px;top:1107.3px" width="11" height="11" viewBox="0 0 11 11"><path d="M1 10L9.6 1.4M2 1.4H9.6V9" fill="none" stroke="#4fae55" stroke-width="1.45"/></svg>
<div style="position:absolute;left:50.7px;top:1141.2px;width:13.0px;height:13.0px;box-sizing:border-box;background:#6d5bd8;border-radius:2px;"></div>
<div class="t" style="left:70.20px;top:1140.41px;font-size:15.4px;font-weight:400;color:#2b2f36;">Keywords B: polestar</div>
<div class="t" style="right:1076.16px;text-align:right;top:1140.41px;font-size:15.4px;font-weight:400;color:#2b2f36;">5.2K</div>
<div class="t" style="right:822.49px;text-align:right;top:1140.41px;font-size:15.4px;font-weight:400;color:#2b2f36;">423</div>
<div class="t" style="right:568.82px;text-align:right;top:1140.41px;font-size:15.4px;font-weight:400;color:#2b2f36;">1.4K</div>
<div class="t" style="right:315.15px;text-align:right;top:1140.41px;font-size:15.4px;font-weight:400;color:#2b2f36;">3.4K</div>
<div class="t" style="right:72.00px;text-align:right;top:1140.41px;font-size:15.4px;font-weight:400;color:#2b2f36;">-7%</div>
<svg style="position:absolute;left:1555px;top:1142.5px" width="11" height="11" viewBox="0 0 11 11"><path d="M1 1L9.6 9.6M9.6 2V9.6H2" fill="none" stroke="#c62f35" stroke-width="1.45"/></svg>
<div class="t" style="left:48.90px;top:1176.21px;font-size:15.4px;font-weight:400;color:#2b2f36;">Total:</div>
<div class="t" style="right:1076.16px;text-align:right;top:1176.21px;font-size:15.4px;font-weight:400;color:#2b2f36;">551K</div>
<div class="t" style="right:822.49px;text-align:right;top:1176.21px;font-size:15.4px;font-weight:400;color:#2b2f36;">13K</div>
<div class="t" style="right:568.82px;text-align:right;top:1176.21px;font-size:15.4px;font-weight:400;color:#2b2f36;">231K</div>
<div class="t" style="right:315.15px;text-align:right;top:1176.21px;font-size:15.4px;font-weight:400;color:#2b2f36;">307K</div>
<div class="t" style="right:72.00px;text-align:right;top:1176.21px;font-size:15.4px;font-weight:400;color:#2b2f36;">26%</div>
<svg style="position:absolute;left:1556px;top:1178.3px" width="11" height="11" viewBox="0 0 11 11"><path d="M1 10L9.6 1.4M2 1.4H9.6V9" fill="none" stroke="#4fae55" stroke-width="1.45"/></svg>
<div style="position:absolute;left:48px;top:1231px;width:188px;height:39px;box-sizing:border-box;background:#e5e7eb;border-radius:8px;"></div>
<div style="position:absolute;left:63px;top:1244px;width:13px;height:13px;box-sizing:border-box;background:#43a047;border-radius:2px;"></div>
<div class="t" style="left:84.00px;top:1243.16px;font-size:15.1px;font-weight:700;color:#2b2f36;">Keywords A results</div>
<div style="position:absolute;left:258px;top:1244px;width:13px;height:13px;box-sizing:border-box;background:#7b68dd;border-radius:2px;"></div>
<div class="t" style="left:279.00px;top:1242.66px;font-size:15.7px;font-weight:400;color:#33373d;">Keywords B results</div>
</div></body></html>
